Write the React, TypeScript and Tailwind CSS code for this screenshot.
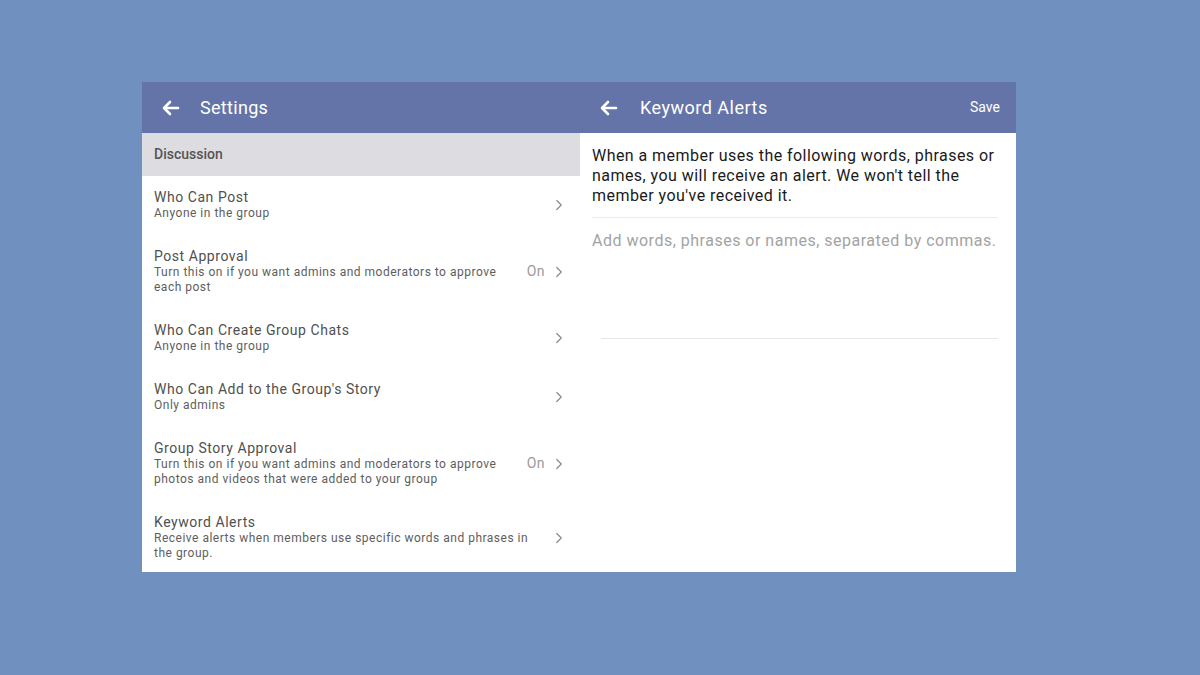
import { ChevronRight } from 'lucide-react';

const font = { fontFamily: 'Roboto, "Liberation Sans", sans-serif' };

type Row = { title: string; sub: string; value?: string };

const rows: Row[] = [
  { title: 'Who Can Post', sub: 'Anyone in the group' },
  { title: 'Post Approval', sub: 'Turn this on if you want admins and moderators to approve each post', value: 'On' },
  { title: 'Who Can Create Group Chats', sub: 'Anyone in the group' },
  { title: "Who Can Add to the Group's Story", sub: 'Only admins' },
  {
    title: 'Group Story Approval',
    sub: 'Turn this on if you want admins and moderators to approve photos and videos that were added to your group',
    value: 'On',
  },
  { title: 'Keyword Alerts', sub: 'Receive alerts when members use specific words and phrases in the group.' },
];

const BackArrow = () => (
  <svg width="18" height="16" viewBox="0 0 18 16" fill="none" stroke="white" strokeWidth="2.6" strokeLinecap="round" strokeLinejoin="round">
    <path d="M16 8H3" />
    <path d="M8 2L2 8l6 6" />
  </svg>
);

const SettingRow = ({ row }: { row: Row }) => (
  <div className="flex items-center pl-[12px] pr-[12px] pt-[13px] pb-[14px]">
    <div className="flex-1 min-w-0 pr-[12px]">
      <div className="text-[14px] leading-[17px] tracking-[0.55px] text-[#505050]">{row.title}</div>
      <div className="text-[12px] leading-[15px] tracking-[0.5px] text-[#5e5e5e]">{row.sub}</div>
    </div>
    {row.value && <span className="text-[14px] tracking-[0.5px] text-[#9a9a9a] mr-[5px]">{row.value}</span>}
    <ChevronRight size={18} strokeWidth={1.6} className="text-[#8a8a8a]" />
  </div>
);

export default function App() {
  return (
    <div className="w-[1200px] h-[675px] bg-[#7091c0] pt-[82px] pl-[142px]" style={font}>
      <div className="w-[874px] h-[490px] bg-white flex flex-col overflow-hidden">
        <div className="h-[51px] shrink-0 bg-[#6474a9] flex items-center text-white">
          <div className="w-[438px] flex items-center pl-[20px]">
            <BackArrow />
            <span className="ml-[20px] text-[18px] tracking-[0.3px]">Settings</span>
          </div>
          <div className="flex-1 flex items-center pl-[20px] pr-[16px]">
            <BackArrow />
            <span className="ml-[22px] text-[18px] tracking-[0.5px]">Keyword Alerts</span>
            <span className="ml-auto text-[14px]">Save</span>
          </div>
        </div>
        <div className="flex flex-1 min-h-0">
          <div className="w-[438px] flex flex-col">
            <div className="h-[43px] shrink-0 bg-[#dddde1] flex items-center pl-[12px] text-[14px] font-medium text-[#555]">
              Discussion
            </div>
            <div>
              {rows.map((r) => (
                <SettingRow key={r.title} row={r} />
              ))}
            </div>
          </div>
          <div className="flex-1 pl-[12px] pr-[14px] pt-[13px]">
            <p className="text-[16px] leading-[20px] tracking-[0.45px] text-[#1a1a1a]">
              When a member uses the following words, phrases or names, you will receive an alert. We won't tell the
              member you've received it.
            </p>
            <div className="h-px bg-[#ececec] mt-[11px] mr-[4px]" />
            <div className="pt-[11px] text-[16px] tracking-[0.5px] text-[#a3a3a3]">
              Add words, phrases or names, separated by commas.
            </div>
            <div className="h-px bg-[#e6e6e6] mt-[85px] ml-[9px] mr-[4px]" />
          </div>
        </div>
      </div>
    </div>
  );
}
